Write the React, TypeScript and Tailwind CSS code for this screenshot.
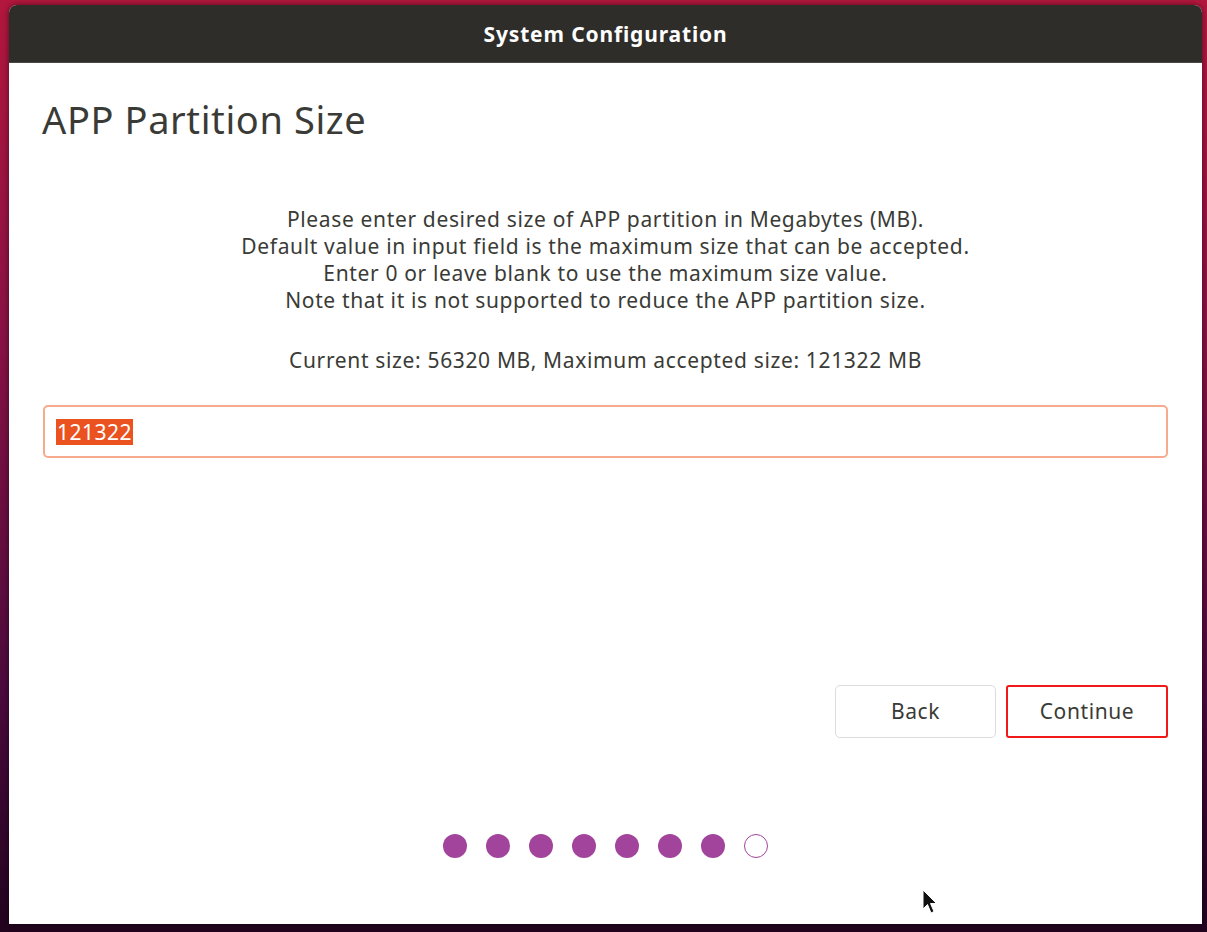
import React from "react";

const font = { fontFamily: '"Noto Sans", "Open Sans", sans-serif' };

export default function App() {
  const dots = [0, 1, 2, 3, 4, 5, 6];
  return (
    <div
      className="w-[1207px] h-[932px] overflow-hidden bg-[linear-gradient(180deg,#b3173d_0%,#8a1245_35%,#4a0a3c_75%,#22041f_100%)] pt-[5px] pl-[9px]"
      style={font}
    >
      <div className="w-[1193px] h-[919px] flex flex-col rounded-t-[8px] overflow-hidden bg-white shadow-[0_0_6px_rgba(0,0,0,0.5)]">
        <div className="h-[58px] shrink-0 bg-[#2f2d2a] flex items-center justify-center border-b border-[#4a4845]">
          <span className="text-[21px] font-bold text-white tracking-[0.85px] mt-[2px]">System Configuration</span>
        </div>
        <div className="flex-1 flex flex-col px-[33px] relative">
          <h1 className="mt-[32px] text-[38px] leading-[48px] text-[#3a3b36] font-normal tracking-[0.6px]">APP Partition Size</h1>
          <div className="mt-[63px] flex flex-col items-center text-[21px] leading-[27px] text-[#3a3b36] tracking-[0.65px]">
            <p>Please enter desired size of APP partition in Megabytes (MB).</p>
            <p>Default value in input field is the maximum size that can be accepted.</p>
            <p>Enter 0 or leave blank to use the maximum size value.</p>
            <p>Note that it is not supported to reduce the APP partition size.</p>
            <p className="mt-[33px]">Current size: 56320 MB, Maximum accepted size: 121322 MB</p>
          </div>
          <div className="mt-[31px] ml-[1px] w-[1125px] h-[53px] rounded-[5px] border-2 border-[#f7ab8c] flex items-center px-[11px]">
            <span className="bg-[#ea5220] text-white text-[21px] leading-[26px] px-[1px] tracking-[0.5px]">121322</span>
          </div>
          <div className="mt-[227px] flex justify-end gap-[10px] pr-[1px]">
            <button className="w-[161px] h-[53px] rounded-[5px] border border-[#dcdcdc] bg-white text-[21px] tracking-[0.6px] text-[#3a3b36]">
              Back
            </button>
            <button className="w-[162px] h-[53px] rounded-[3px] border-2 border-[#f01818] bg-white text-[21px] tracking-[0.6px] text-[#3a3b36]">
              Continue
            </button>
          </div>
          <div className="mt-[96px] flex justify-center gap-[19px] pr-[0px]">
            {dots.map((d) => (
              <div key={d} className="w-[24px] h-[24px] rounded-full bg-[#a3449c]" />
            ))}
            <div className="w-[24px] h-[24px] rounded-full border-[1.5px] border-[#a3449c] bg-white" />
          </div>
          <svg className="absolute left-[913px] top-[826px]" width="16" height="26" viewBox="0 0 16 26">
            <path d="M1 1 L1 20 L5.5 15.5 L9 24 L12 22.5 L8.5 14.5 L14.5 14.5 Z" fill="#111" stroke="#fff" strokeWidth="1" />
          </svg>
        </div>
      </div>
    </div>
  );
}
